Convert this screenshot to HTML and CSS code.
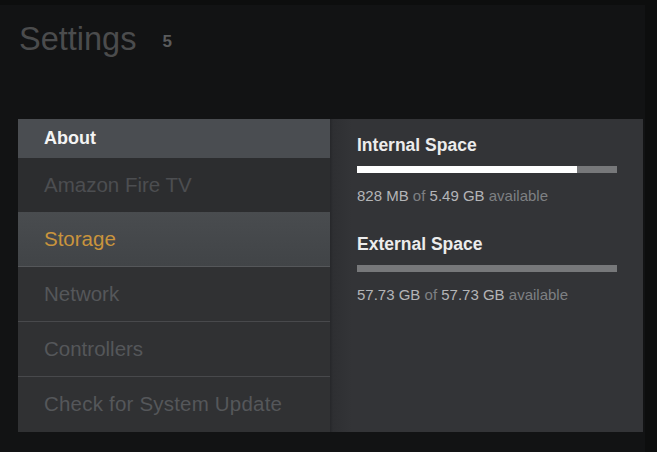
FILE: index.html
```html
<!DOCTYPE html>
<html>
<head>
<meta charset="utf-8">
<link rel="stylesheet" href="styles.css">
</head>
<body>
<div class="screen">
  <header class="header">
    <h1 class="title">Settings</h1>
    <span class="count">5</span>
  </header>
  <main class="panel">
    <nav class="menu">
      <div class="menu-head">About</div>
      <div class="item item-dim">Amazon Fire TV</div>
      <div class="item item-active">Storage</div>
      <div class="item">Network</div>
      <div class="item">Controllers</div>
      <div class="item item-last">Check for System Update</div>
    </nav>
    <section class="detail">
      <div class="space">
        <h2 class="space-title">Internal Space</h2>
        <div class="bar"><div class="bar-fill" style="width:84.6%"></div></div>
        <p class="space-info"><b>828 MB</b> of <b>5.49 GB</b> available</p>
      </div>
      <div class="space">
        <h2 class="space-title">External Space</h2>
        <div class="bar"><div class="bar-fill" style="width:0%"></div></div>
        <p class="space-info"><b>57.73 GB</b> of <b>57.73 GB</b> available</p>
      </div>
    </section>
  </main>
</div>
</body>
</html>
```

FILE: styles.css
```css
html, body {
  margin: 0;
  padding: 0;
  background: #0d0e0e;
}
body {
  width: 657px;
  height: 452px;
  overflow: hidden;
  font-family: "Liberation Sans", Arial, sans-serif;
}
.screen {
  width: 645px;
  height: 452px;
  margin-top: 5px;
  background: #121314;
  box-sizing: border-box;
  padding-left: 18px;
}
.header {
  height: 114px;
  display: flex;
  align-items: flex-start;
}
.title {
  margin: 16px 0 0 1px;
  font-size: 32.5px;
  font-weight: normal;
  color: #4b4c4d;
  line-height: 36px;
}
.count {
  margin: 27px 0 0 26px;
  font-size: 17px;
  font-weight: bold;
  color: #5a5b5c;
  line-height: 20px;
}
.panel {
  display: flex;
  width: 625px;
  height: 313px;
}
.menu {
  width: 312px;
  background: #303133;
  display: flex;
  flex-direction: column;
}
.menu-head {
  height: 39px;
  background: #4a4d51;
  color: #f4f4f4;
  font-weight: bold;
  font-size: 18px;
  line-height: 39px;
  padding-left: 26px;
  box-sizing: border-box;
}
.item {
  height: 55px;
  padding-left: 26px;
  box-sizing: border-box;
  font-size: 20.5px;
  line-height: 54px;
  color: #55575a;
  border-bottom: 1px solid #48494c;
}
.item-dim {
  background: #2c2d2f;
  border-bottom: none;
  height: 54px;
  color: #4c4e51;
}
.item-active {
  background: linear-gradient(#494c4f, #414447);
  color: #c9943d;
  border-bottom: 1px solid #55575a;
}
.item-last {
  border-bottom: none;
  letter-spacing: 0.2px;
}
.detail {
  flex: 1;
  background: linear-gradient(to right, #26272a 0px, #2e2f32 3px, #333437 22px, #333437 100%);
  padding: 16px 26px 0 27px;
  box-sizing: border-box;
}
.space {
  margin-bottom: 29px;
}
.space-title {
  margin: 0;
  font-size: 17.5px;
  font-weight: bold;
  color: #ececec;
  line-height: 20px;
}
.bar {
  margin-top: 11px;
  height: 7px;
  background: #77787a;
}
.bar-fill {
  height: 100%;
  background: #ffffff;
}
.space-info {
  margin: 14px 0 0 0;
  font-size: 15px;
  line-height: 18px;
  color: #7e8083;
}
.space-info b {
  font-weight: normal;
  color: #b4b5b7;
}
```
